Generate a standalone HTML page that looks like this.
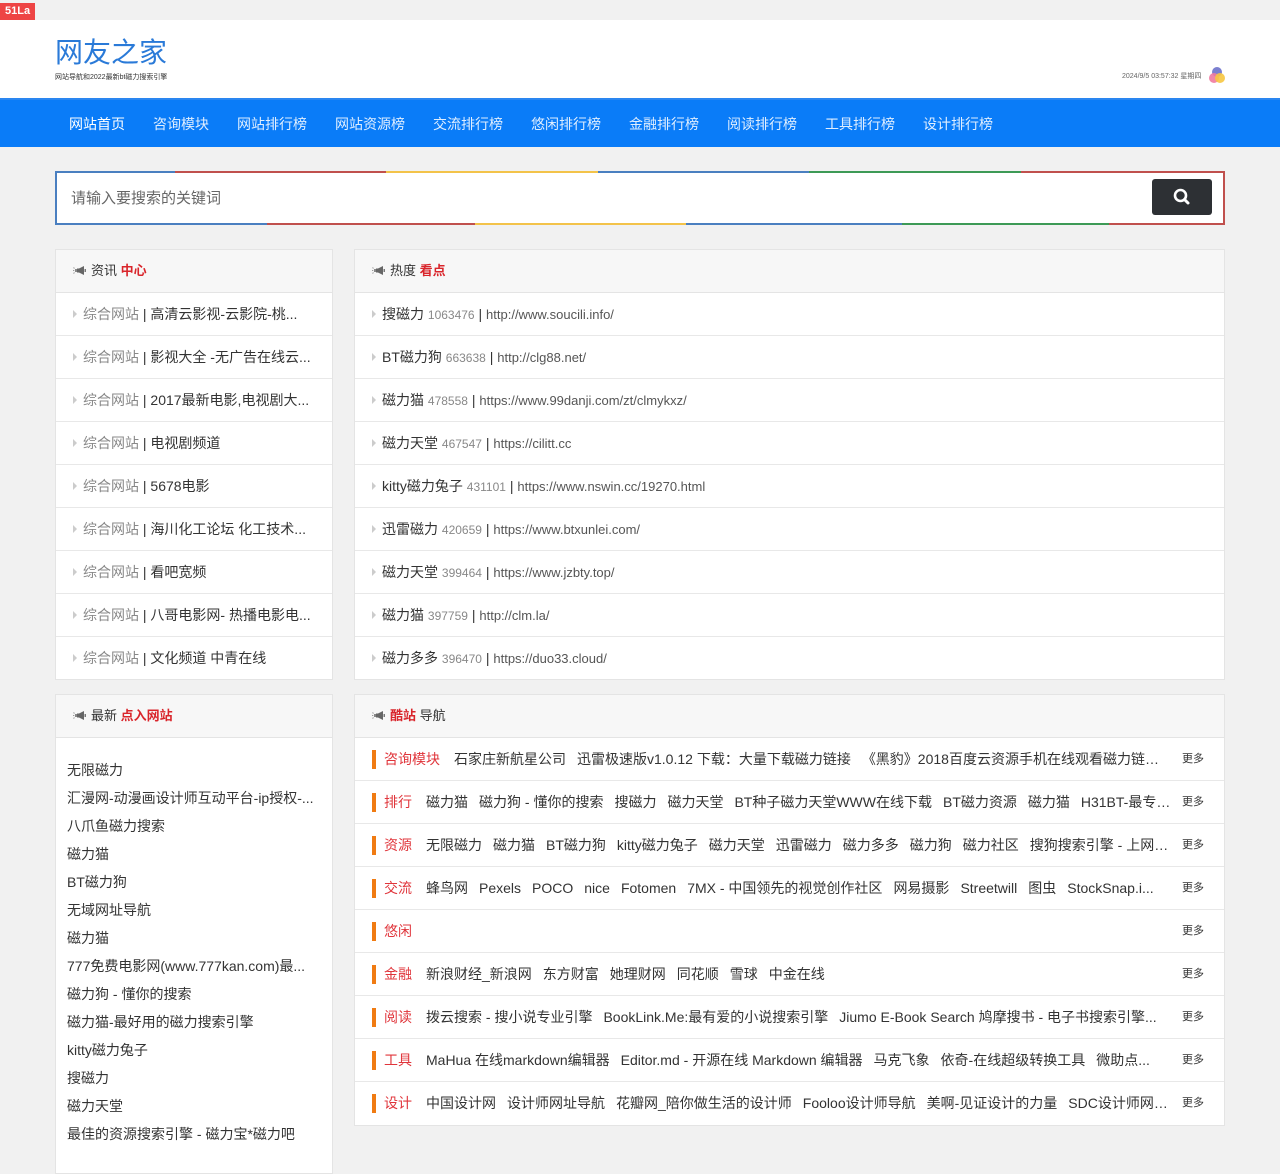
<!DOCTYPE html>
<html><head><meta charset="utf-8"><style>
*{margin:0;padding:0;box-sizing:border-box}
body{width:1280px;height:1167px;overflow:hidden;background:#f1f1f1;font-family:"Liberation Sans","Noto Sans CJK SC",sans-serif;color:#333;font-size:14px;position:relative}
.top{height:20px;background:#f1f1f1;position:relative}
.badge{position:absolute;left:0;top:3px;background:#e44;color:#fff;font-size:11px;font-weight:bold;padding:1px 5px;line-height:15px}
.header{height:78px;background:#fff;position:relative}
.logo{position:absolute;left:55px;top:15px;font-size:28px;color:#2a7ad8;line-height:36px;letter-spacing:0px}
.sub{position:absolute;left:55px;top:52px;font-size:7px;color:#333}
.date{position:absolute;left:1122px;top:51px;font-size:7px;color:#666}
.nav{height:49px;background:#0a7cf8;border-top:2px solid #2a86f0;padding-left:69px;display:flex;align-items:center}
.nav a{color:#dfeeff;font-size:14px;margin-right:28px;text-decoration:none}
.nav a:first-child{color:#fff}
.search{position:absolute;left:55px;top:171px;width:1170px;height:54px;background:#fff;border-left:2px solid #4a7fc0;border-right:2px solid #c0504d}
.seg{position:absolute;height:2px}
.ph{position:absolute;left:14px;top:16px;color:#666;font-size:15px}
.btn{position:absolute;left:1095px;top:8px;width:60px;height:36px;background:#2d3034;border-radius:3px}
.panel{position:absolute;background:#fff;border:1px solid #e4e4e4}
.ph2{height:43px;background:#f7f7f7;border-bottom:1px solid #e4e4e4;padding-left:17px;line-height:42px;font-size:13px;color:#333}
.ph2 b{color:#d9252b;font-weight:bold}
.ic{display:inline-block;width:14px;height:11px;margin-right:4px;vertical-align:-1px}
.row{height:43px;border-bottom:1px solid #e8e8e8;line-height:42px;padding-left:17px;white-space:nowrap;overflow:hidden;font-size:14px}
.row:last-child{border-bottom:none}
.tri{display:inline-block;width:0;height:0;border-left:4px solid #ccc;border-top:4px solid transparent;border-bottom:4px solid transparent;margin-right:6px;vertical-align:1px}
.g{color:#888}
.n{color:#888;font-size:12px}
.u{color:#555;font-size:13px}
.list div{height:28px;line-height:28px;padding-left:11px;font-size:14px;color:#333;white-space:nowrap}
.cr{height:43px;border-bottom:1px solid #e8e8e8;position:relative;white-space:nowrap}
.cr:last-child{border-bottom:none}
.bar{position:absolute;left:17px;top:12px;width:4px;height:19px;background:#f07b12}
.lab{position:absolute;left:29px;top:0;line-height:43px;color:#e0353b;font-size:14px}
.it{position:absolute;top:0;line-height:43px;right:52px;overflow:hidden;text-overflow:ellipsis;font-size:14px;color:#333;word-spacing:0}
.it span{margin-right:11px}
.more{position:absolute;left:827px;top:0;line-height:43px;font-size:11px;color:#333}
</style></head><body>
<svg width="0" height="0" style="position:absolute"><defs><symbol id="mg" viewBox="0 0 14 11"><path d="M4 3.5h2L11 1v9L6 7.5H4z" fill="#666"/><rect x="2" y="4" width="2" height="3" fill="#888"/><path d="M0.5 2.5l1 1M0.5 8.5l1-1M0 5.5h1.3" stroke="#999" stroke-width="1"/><rect x="11.5" y="4" width="1.5" height="3" fill="#777"/></symbol></defs></svg>
<div class="top"><span class="badge">51La</span></div>
<div class="header">
<div class="logo">网友之家</div>
<div class="sub">网站导航和2022最新bt磁力搜索引擎</div>
<div class="date">2024/9/5 03:57:32 星期四</div>
<svg style="position:absolute;left:1208px;top:46px" width="18" height="18"><circle cx="9" cy="6" r="5" fill="#7b7fd0"/><circle cx="6" cy="12" r="5" fill="#f07aa0" opacity=".9"/><circle cx="12" cy="12" r="5" fill="#f7c640" opacity=".9"/></svg>
</div>
<div class="nav"><a>网站首页</a><a>咨询模块</a><a>网站排行榜</a><a>网站资源榜</a><a>交流排行榜</a><a>悠闲排行榜</a><a>金融排行榜</a><a>阅读排行榜</a><a>工具排行榜</a><a>设计排行榜</a></div>

<div class="search">
<div class="seg" style="top:0;left:0;width:118px;background:#4a7fc0"></div>
<div class="seg" style="top:0;left:118px;width:211px;background:#c0504d"></div>
<div class="seg" style="top:0;left:329px;width:212px;background:#f3c34a"></div>
<div class="seg" style="top:0;left:541px;width:211px;background:#4a7fc0"></div>
<div class="seg" style="top:0;left:752px;width:212px;background:#3d9a56"></div>
<div class="seg" style="top:0;left:964px;width:204px;background:#c0504d"></div>
<div class="seg" style="bottom:0;left:0;width:210px;background:#4a7fc0"></div>
<div class="seg" style="bottom:0;left:210px;width:208px;background:#c0504d"></div>
<div class="seg" style="bottom:0;left:418px;width:211px;background:#f3c34a"></div>
<div class="seg" style="bottom:0;left:629px;width:216px;background:#4a7fc0"></div>
<div class="seg" style="bottom:0;left:845px;width:207px;background:#3d9a56"></div>
<div class="seg" style="bottom:0;left:1052px;width:116px;background:#c0504d"></div>
<div class="ph">请输入要搜索的关键词</div>
<div class="btn"><svg width="60" height="36"><circle cx="28.5" cy="16.5" r="5.5" fill="none" stroke="#fff" stroke-width="2.6"/><line x1="32.5" y1="20.5" x2="36" y2="24" stroke="#fff" stroke-width="3" stroke-linecap="round"/></svg></div>
</div>

<div class="panel" style="left:55px;top:249px;width:278px;height:431px">
<div class="ph2"><svg class="ic"><use href="#mg"/></svg>资讯 <b>中心</b></div>
<div class="row"><i class="tri"></i><span class="g">综合网站</span> | 高清云影视-云影院-桃...</div>
<div class="row"><i class="tri"></i><span class="g">综合网站</span> | 影视大全 -无广告在线云...</div>
<div class="row"><i class="tri"></i><span class="g">综合网站</span> | 2017最新电影,电视剧大...</div>
<div class="row"><i class="tri"></i><span class="g">综合网站</span> | 电视剧频道</div>
<div class="row"><i class="tri"></i><span class="g">综合网站</span> | 5678电影</div>
<div class="row"><i class="tri"></i><span class="g">综合网站</span> | 海川化工论坛 化工技术...</div>
<div class="row"><i class="tri"></i><span class="g">综合网站</span> | 看吧宽频</div>
<div class="row"><i class="tri"></i><span class="g">综合网站</span> | 八哥电影网- 热播电影电...</div>
<div class="row"><i class="tri"></i><span class="g">综合网站</span> | 文化频道 中青在线</div>
</div>

<div class="panel" style="left:354px;top:249px;width:871px;height:431px">
<div class="ph2"><svg class="ic"><use href="#mg"/></svg>热度 <b>看点</b></div>
<div class="row"><i class="tri"></i>搜磁力 <span class="n">1063476</span> | <span class="u">http://www.soucili.info/</span></div>
<div class="row"><i class="tri"></i>BT磁力狗 <span class="n">663638</span> | <span class="u">http://clg88.net/</span></div>
<div class="row"><i class="tri"></i>磁力猫 <span class="n">478558</span> | <span class="u">https://www.99danji.com/zt/clmykxz/</span></div>
<div class="row"><i class="tri"></i>磁力天堂 <span class="n">467547</span> | <span class="u">https://cilitt.cc</span></div>
<div class="row"><i class="tri"></i>kitty磁力兔子 <span class="n">431101</span> | <span class="u">https://www.nswin.cc/19270.html</span></div>
<div class="row"><i class="tri"></i>迅雷磁力 <span class="n">420659</span> | <span class="u">https://www.btxunlei.com/</span></div>
<div class="row"><i class="tri"></i>磁力天堂 <span class="n">399464</span> | <span class="u">https://www.jzbty.top/</span></div>
<div class="row"><i class="tri"></i>磁力猫 <span class="n">397759</span> | <span class="u">http://clm.la/</span></div>
<div class="row"><i class="tri"></i>磁力多多 <span class="n">396470</span> | <span class="u">https://duo33.cloud/</span></div>
</div>

<div class="panel" style="left:55px;top:694px;width:278px;height:480px">
<div class="ph2"><svg class="ic"><use href="#mg"/></svg>最新 <b>点入网站</b></div>
<div class="list" style="padding-top:18px">
<div>无限磁力</div><div>汇漫网-动漫画设计师互动平台-ip授权-...</div><div>八爪鱼磁力搜索</div><div>磁力猫</div><div>BT磁力狗</div><div>无域网址导航</div><div>磁力猫</div><div>777免费电影网(www.777kan.com)最...</div><div>磁力狗 - 懂你的搜索</div><div>磁力猫-最好用的磁力搜索引擎</div><div>kitty磁力兔子</div><div>搜磁力</div><div>磁力天堂</div><div>最佳的资源搜索引擎 - 磁力宝*磁力吧</div>
</div></div>

<div class="panel" style="left:354px;top:694px;width:871px;height:432px">
<div class="ph2"><svg class="ic"><use href="#mg"/></svg><b>酷站</b> 导航</div>
<div class="cr"><i class="bar"></i><span class="lab">咨询模块</span><div class="it" style="left:99px"><span>石家庄新航星公司</span><span>迅雷极速版v1.0.12 下载：大量下载磁力链接</span><span>《黑豹》2018百度云资源手机在线观看磁力链接...</span></div><span class="more">更多</span></div>
<div class="cr"><i class="bar"></i><span class="lab">排行</span><div class="it" style="left:71px"><span>磁力猫</span><span>磁力狗 - 懂你的搜索</span><span>搜磁力</span><span>磁力天堂</span><span>BT种子磁力天堂WWW在线下载</span><span>BT磁力资源</span><span>磁力猫</span><span>H31BT-最专...</span></div><span class="more">更多</span></div>
<div class="cr"><i class="bar"></i><span class="lab">资源</span><div class="it" style="left:71px"><span>无限磁力</span><span>磁力猫</span><span>BT磁力狗</span><span>kitty磁力兔子</span><span>磁力天堂</span><span>迅雷磁力</span><span>磁力多多</span><span>磁力狗</span><span>磁力社区</span><span>搜狗搜索引擎 - 上网...</span></div><span class="more">更多</span></div>
<div class="cr"><i class="bar"></i><span class="lab">交流</span><div class="it" style="left:71px"><span>蜂鸟网</span><span>Pexels</span><span>POCO</span><span>nice</span><span>Fotomen</span><span>7MX - 中国领先的视觉创作社区</span><span>网易摄影</span><span>Streetwill</span><span>图虫</span><span>StockSnap.i...</span></div><span class="more">更多</span></div>
<div class="cr"><i class="bar"></i><span class="lab">悠闲</span><span class="more">更多</span></div>
<div class="cr"><i class="bar"></i><span class="lab">金融</span><div class="it" style="left:71px"><span>新浪财经_新浪网</span><span>东方财富</span><span>她理财网</span><span>同花顺</span><span>雪球</span><span>中金在线</span></div><span class="more">更多</span></div>
<div class="cr"><i class="bar"></i><span class="lab">阅读</span><div class="it" style="left:71px"><span>拨云搜索 - 搜小说专业引擎</span><span>BookLink.Me:最有爱的小说搜索引擎</span><span>Jiumo E-Book Search 鸠摩搜书 - 电子书搜索引擎...</span></div><span class="more">更多</span></div>
<div class="cr"><i class="bar"></i><span class="lab">工具</span><div class="it" style="left:71px"><span>MaHua 在线markdown编辑器</span><span>Editor.md - 开源在线 Markdown 编辑器</span><span>马克飞象</span><span>依奇-在线超级转换工具</span><span>微助点...</span></div><span class="more">更多</span></div>
<div class="cr"><i class="bar"></i><span class="lab">设计</span><div class="it" style="left:71px"><span>中国设计网</span><span>设计师网址导航</span><span>花瓣网_陪你做生活的设计师</span><span>Fooloo设计师导航</span><span>美啊-见证设计的力量</span><span>SDC设计师网址...</span></div><span class="more">更多</span></div>
</div>
</body></html>
